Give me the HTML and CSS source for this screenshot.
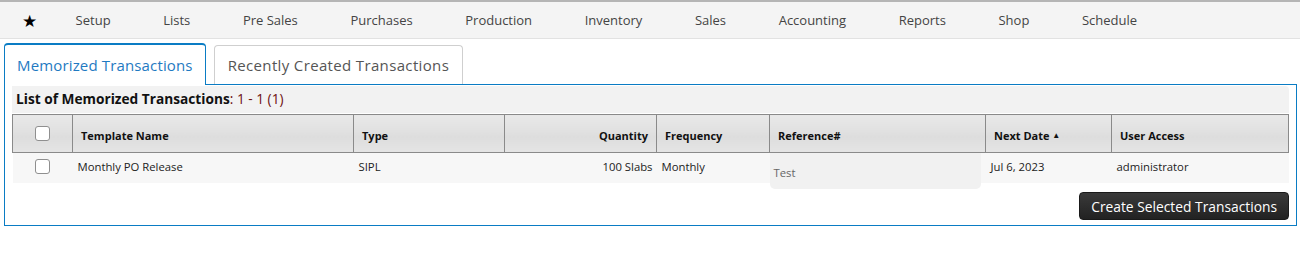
FILE: index.html
```html
<!DOCTYPE html>
<html lang="en">
<head>
    <meta charset="UTF-8">
    <title>Memorized Transactions</title>
    <link rel="stylesheet" href="styles.css">
</head>
<body>
    <!-- Main menu -->
    <div class="menubar">
        <span class="menu-star">&#9733;</span>
        <a class="menu-item">Setup</a>
        <a class="menu-item">Lists</a>
        <a class="menu-item">Pre Sales</a>
        <a class="menu-item">Purchases</a>
        <a class="menu-item">Production</a>
        <a class="menu-item">Inventory</a>
        <a class="menu-item">Sales</a>
        <a class="menu-item">Accounting</a>
        <a class="menu-item">Reports</a>
        <a class="menu-item">Shop</a>
        <a class="menu-item">Schedule</a>
    </div>

    <!-- Tabs -->
    <div class="tabs">
        <div class="tab active">Memorized Transactions</div>
        <div class="tab">Recently Created Transactions</div>
    </div>

    <div class="panel">
        <div class="list-title">List of Memorized Transactions<span class="count">: 1 - 1 (1)</span></div>
        <table class="grid">
            <colgroup>
                <col class="col-check">
                <col class="col-name">
                <col class="col-type">
                <col class="col-qty">
                <col class="col-freq">
                <col class="col-ref">
                <col class="col-date">
                <col class="col-user">
            </colgroup>
            <thead>
                <tr>
                    <th class="check"><span class="checkbox"></span></th>
                    <th>Template Name</th>
                    <th>Type</th>
                    <th class="num">Quantity</th>
                    <th>Frequency</th>
                    <th>Reference#</th>
                    <th>Next Date <span class="sort">&#9650;</span></th>
                    <th>User Access</th>
                </tr>
            </thead>
            <tbody>
                <tr>
                    <td class="check"><span class="checkbox"></span></td>
                    <td>Monthly PO Release</td>
                    <td>SIPL</td>
                    <td class="num">100 Slabs</td>
                    <td>Monthly</td>
                    <td class="ref-cell"><div class="ref-box">Test</div></td>
                    <td>Jul 6, 2023</td>
                    <td>administrator</td>
                </tr>
            </tbody>
        </table>
        <div class="actions">
            <button class="btn-dark">Create Selected Transactions</button>
        </div>
    </div>
</body>
</html>
```

FILE: styles.css
```css
body {
    margin: 0;
    font-family: "Open Sans", Arial, sans-serif;
    color: #222;
    background: #fff;
}
.menubar {
    display: flex;
    align-items: center;
    gap: 52.6px;
    height: 36px;
    padding-left: 22px;
    background: #f4f4f4;
    border-top: 2px solid #b5b5b5;
    border-bottom: 1px solid #e2e2e2;
}
.menu-star {
    font-size: 17px;
    color: #000;
    margin-right: -14px;
}
.menu-item {
    font-size: 13px;
    color: #444;
    cursor: pointer;
}
.tabs {
    display: flex;
    align-items: flex-end;
    gap: 8px;
    padding-left: 4px;
    margin-top: 4px;
}
.tab {
    height: 38px;
    line-height: 38px;
    padding: 0 13px;
    font-size: 15px;
    letter-spacing: 0.35px;
    color: #555;
    border: 1px solid #cfcfcf;
    border-bottom: none;
    border-radius: 4px 4px 0 0;
    background: #fff;
}
.tab.active {
    height: 40px;
    line-height: 40px;
    padding: 0 12px;
    letter-spacing: 0.15px;
    color: #1f7ac2;
    border: 1px solid #0a7cc4;
    border-top-width: 2px;
    border-bottom: none;
    position: relative;
    z-index: 1;
    margin-bottom: -1px;
}
.panel {
    margin: 0 3px 0 4px;
    border: 1px solid #0a7cc4;
    padding: 1px 7px 5px 7px;
}
.list-title {
    height: 27px;
    line-height: 26px;
    padding-left: 4px;
    background: #f2f2f2;
    border-radius: 0 4px 0 0;
    font-size: 13.7px;
    font-weight: bold;
    color: #111;
    margin-bottom: 1px;
}
.count {
    font-weight: normal;
    color: #6e1010;
}
.grid {
    width: 100%;
    border-collapse: collapse;
    table-layout: fixed;
    font-size: 11.3px;
}
.grid th {
    height: 34px;
    text-align: left;
    padding: 3px 8px 0 8px;
    font-size: 11px;
    font-weight: bold;
    color: #111;
    border: 1px solid #8a8a8a;
    background: linear-gradient(#e9e9e9, #dddddd 60%, #e5e5e5);
}
.grid td {
    height: 30px;
    padding: 0 4px 0 5px;
    vertical-align: top;
    line-height: 28px;
    background: #f7f7f7;
    color: #222;
}
.grid .num {
    text-align: right;
}
.grid th.num {
    padding-right: 8px;
}
.grid .check {
    text-align: center;
    padding: 0;
}
.col-check { width: 60px; }
.col-name { width: 281px; }
.col-type { width: 151px; }
.col-qty { width: 152px; }
.col-freq { width: 113px; }
.col-ref { width: 216px; }
.col-date { width: 126px; }
.checkbox {
    display: inline-block;
    width: 13px;
    height: 13px;
    border: 1px solid #8f8f8f;
    border-radius: 3px;
    background: #fff;
    vertical-align: middle;
}
.grid th.check .checkbox {
    margin-top: -4px;
}
.grid td.check .checkbox {
    margin-top: -2px;
}
.grid td.ref-cell {
    padding: 0;
}
.ref-box {
    width: 211px;
    height: 36px;
    margin-bottom: -6px;
    padding-left: 4px;
    box-sizing: border-box;
    line-height: 40px;
    background: #f1f1f1;
    border-radius: 0 0 5px 5px;
    color: #666;
}
.sort {
    font-size: 8px;
    vertical-align: 2px;
}
.actions {
    display: flex;
    justify-content: flex-end;
    margin-top: 9px;
}
.btn-dark {
    height: 28px;
    padding: 0 11px;
    font-family: "Open Sans", Arial, sans-serif;
    font-size: 13.8px;
    color: #fff;
    background: linear-gradient(#3a3a3a, #222);
    border: 1px solid #1a1a1a;
    border-radius: 4px;
    cursor: pointer;
}
```
